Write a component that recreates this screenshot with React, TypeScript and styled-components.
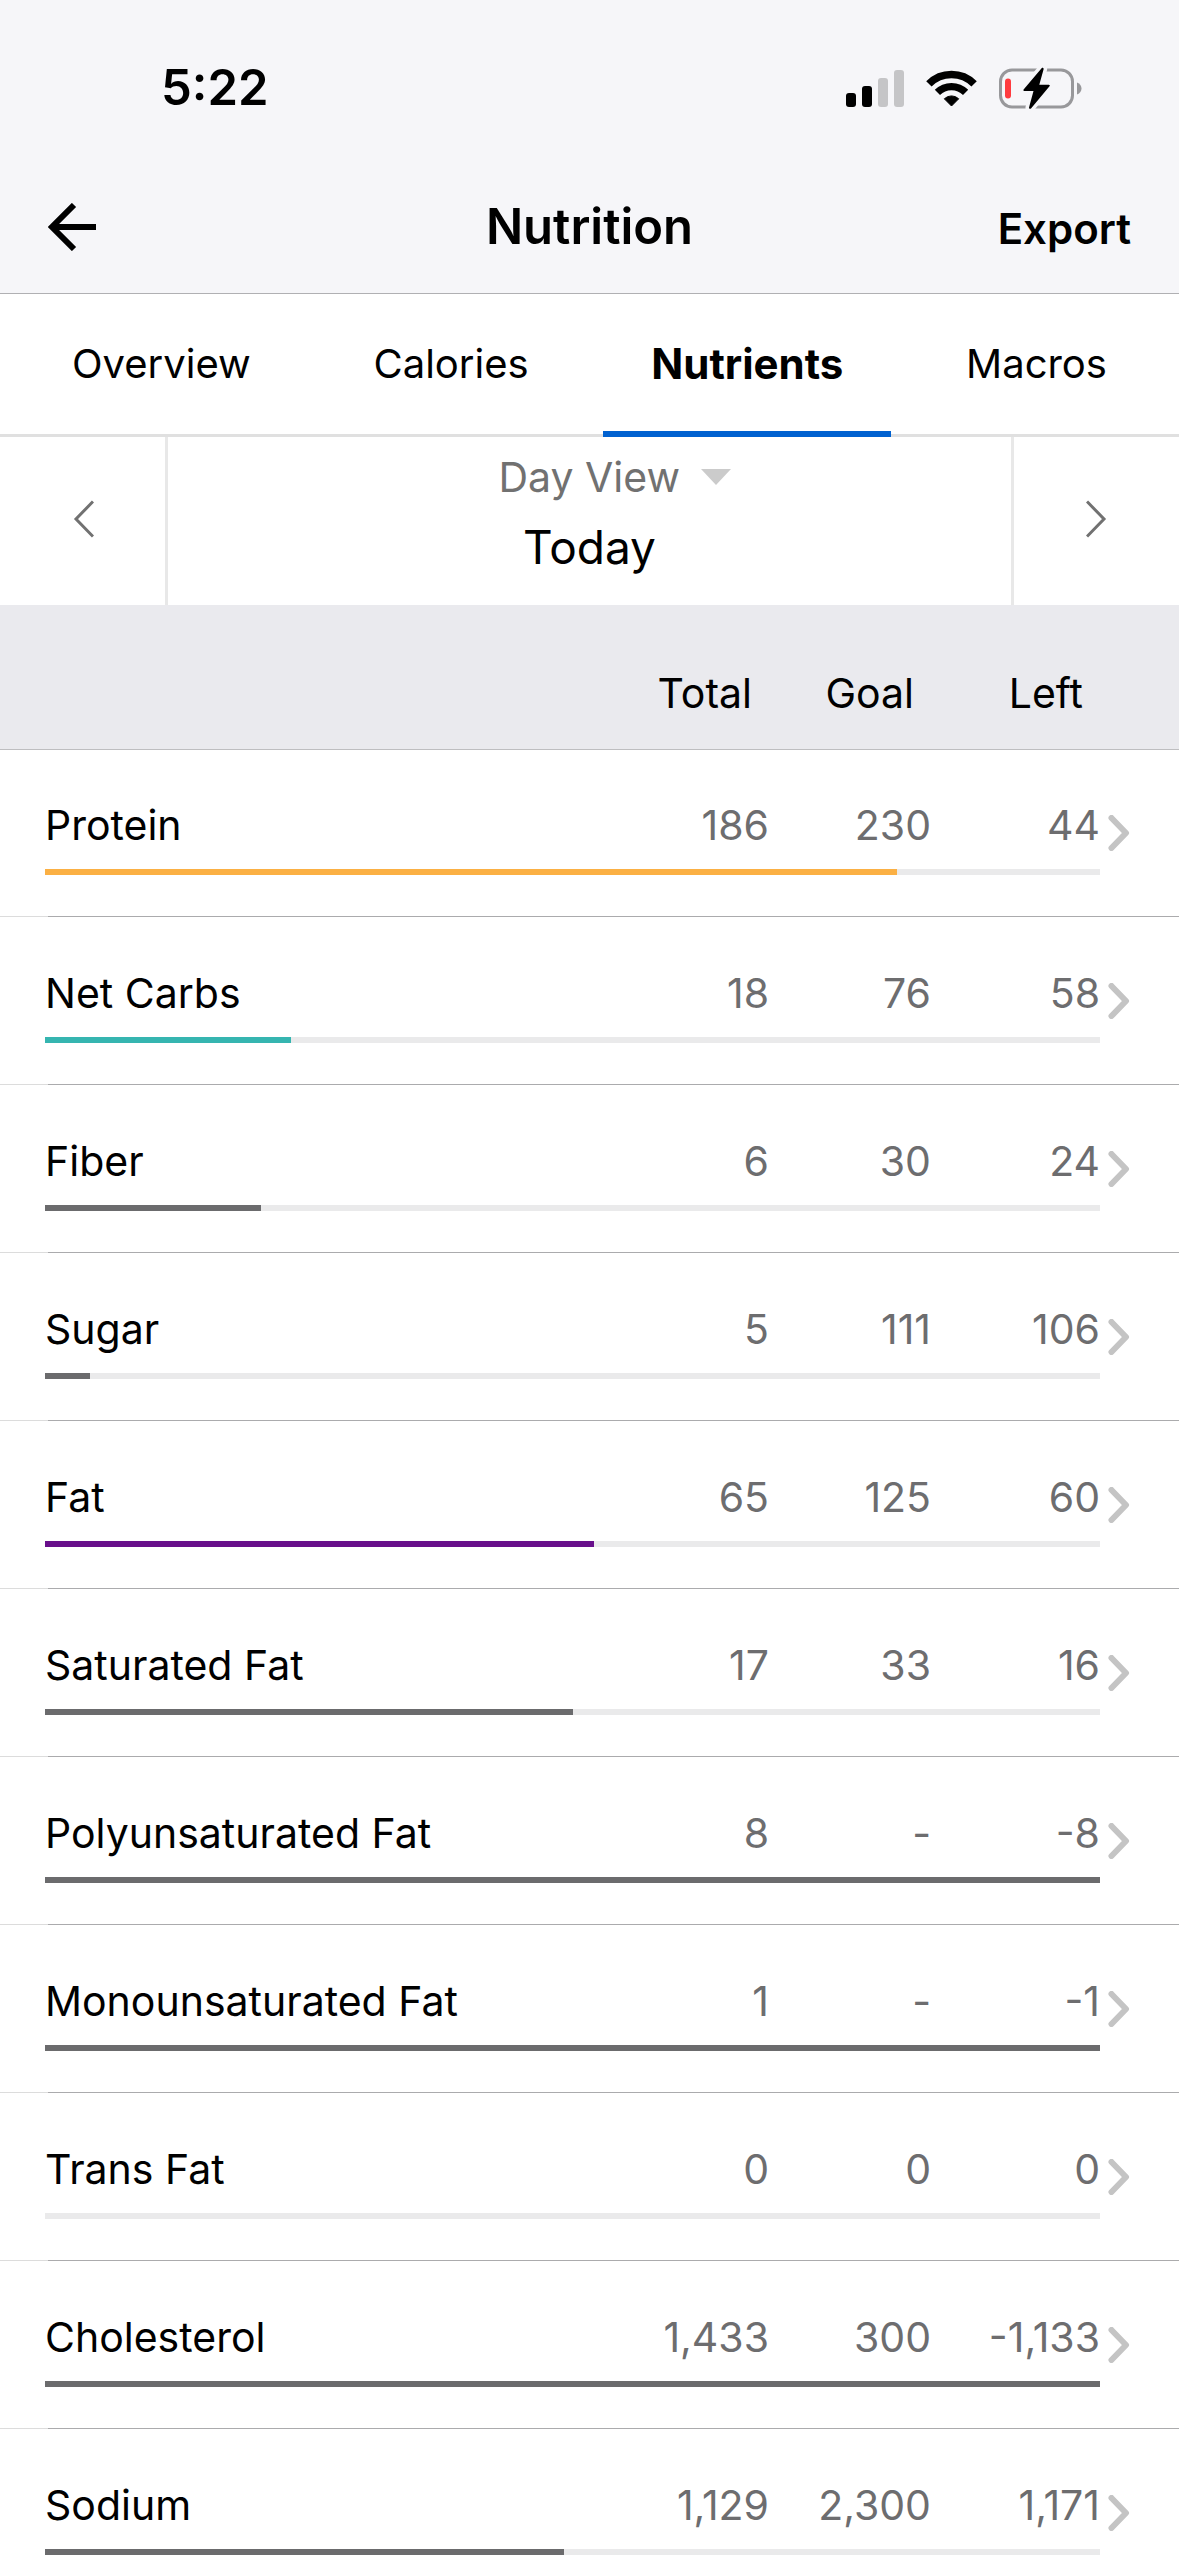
import React from "react";
import styled, { createGlobalStyle } from "styled-components";

const GlobalStyle = createGlobalStyle`
  *, *::before, *::after { box-sizing: border-box; }
  body { margin: 0; background: #fff; }
  button, select { font: inherit; color: inherit; border: 0; background: none; padding: 0; margin: 0; }
`;

const Screen = styled.div`
  display: flex;
  flex-direction: column;
  height: 100vh;
  overflow: hidden;
  background: #fff;
  color: #000;
  font-family: Inter, "Liberation Sans", sans-serif;
  font-size: 41px;
  line-height: 48px;
`;

const TopArea = styled.header`
  flex: none;
  background: #f6f6f9;
  border-bottom: 1px solid #b0b0b3;
`;

const StatusBar = styled.div`
  display: flex;
  align-items: center;
  justify-content: space-between;
  height: 160px;
  padding: 16px 96px 0 161px;
`;

const Clock = styled.time`
  font-size: 49px;
  line-height: 60px;
  font-weight: 600;
`;

const StatusIcons = styled.div`
  display: flex;
  align-items: center;
  gap: 22px;
`;

const NavBar = styled.div`
  display: grid;
  grid-template-columns: 1fr auto 1fr;
  align-items: baseline;
  height: 133px;
  padding: 37px 48px 36px;
`;

const BackButton = styled.button`
  display: flex;
  align-self: center;
  justify-self: start;
`;

const Title = styled.h1`
  margin: 0;
  font-size: 49px;
  line-height: 60px;
  font-weight: 600;
`;

const ExportButton = styled.button`
  justify-self: end;
  font-size: 42px;
  font-weight: 600;
`;

const Tabs = styled.nav`
  display: flex;
  flex: none;
  justify-content: space-between;
  height: 143px;
  padding: 0 24px;
  box-shadow: inset 0 -3px #e0e0e0;
`;

const Tab = styled.a<{ $active?: boolean }>`
  padding: 46px 48px 0;
  color: inherit;
  text-decoration: none;
  font-size: ${(p) => (p.$active ? 42 : 40)}px;
  font-weight: ${(p) => (p.$active ? 700 : 400)};
  border-bottom: 6px solid ${(p) => (p.$active ? "#0061d0" : "transparent")};
`;

const DateBar = styled.section`
  display: grid;
  flex: none;
  grid-template-columns: 168px 1fr 168px;
  height: 168px;
`;

const StepButton = styled.button<{ $side: "left" | "right" }>`
  display: flex;
  align-items: center;
  justify-content: center;
  padding-bottom: 4px;
  color: #717171;
  border-${(p) => (p.$side === "left" ? "right" : "left")}: 3px solid #e8e8e8;
`;

const DatePick = styled.div`
  display: flex;
  flex-direction: column;
  align-items: center;
  gap: 20px;
  padding-top: 16px;
`;

const ViewPicker = styled.label`
  display: flex;
  align-items: center;
  gap: 20px;
  padding-left: 50px;
  color: #717171;
`;

const ViewSelect = styled.select`
  appearance: none;
  line-height: 48px;
`;

const Today = styled.span`
  font-size: 46px;
  line-height: 52px;
`;

const Scroller = styled.main`
  flex: 1;
  min-height: 0;
  overflow-y: auto;
  scrollbar-width: none;
`;

const Table = styled.table`
  display: block;
`;

const Head = styled.thead`
  display: block;
  background: #eaeaee;
`;

const Body = styled.tbody`
  display: block;
  background: linear-gradient(#bebec0, #bebec0) top / 100% 1px no-repeat;
`;

const columns = "1fr 162px 162px 169px 79px";

const HeadRow = styled.tr`
  display: grid;
  grid-template-columns: ${columns};
  padding: 64px 0 32px 45px;
`;

const HeadCell = styled.th`
  padding: 0 17px 0 0;
  font-weight: 400;
  text-align: right;
`;

const Row = styled.tr`
  display: grid;
  grid-template-columns: ${columns};
  padding: 1px 0 1px 45px;
  background: linear-gradient(90deg, #dcdcdc 48px, #ababad 48px) bottom / 100% 1px no-repeat;
`;

const Name = styled.th`
  padding: 51px 0 20px;
  font-weight: 400;
  text-align: left;
  white-space: nowrap;
`;

const Amount = styled.td`
  padding: 51px 0 20px;
  color: #6d6d6f;
  text-align: right;
`;

const More = styled.td`
  display: flex;
  grid-column: 5;
  grid-row: 1 / span 2;
  align-items: center;
  padding: 0 0 0 8px;
`;

const MoreButton = styled.button`
  display: flex;
  color: #c4c4c4;
`;

const BarCell = styled.td`
  grid-column: 1 / 5;
  grid-row: 2;
  padding: 0 0 41px;
`;

const Track = styled.div`
  height: 6px;
  background: #eaeaeb;
`;

const Fill = styled.div<{ $color: string }>`
  height: 100%;
  background: ${(p) => p.$color};
`;

const GREY = "#6b6b6d";

type Nutrient = {
  name: string;
  total: string;
  goal: string;
  left: string;
  percent: number;
  color?: string;
};

const nutrients: Nutrient[] = [
  { name: "Protein", total: "186", goal: "230", left: "44", percent: 80.8, color: "#fbb044" },
  { name: "Net Carbs", total: "18", goal: "76", left: "58", percent: 23.3, color: "#35b5b0" },
  { name: "Fiber", total: "6", goal: "30", left: "24", percent: 20.5 },
  { name: "Sugar", total: "5", goal: "111", left: "106", percent: 4.3 },
  { name: "Fat", total: "65", goal: "125", left: "60", percent: 52, color: "#680f8b" },
  { name: "Saturated Fat", total: "17", goal: "33", left: "16", percent: 50 },
  { name: "Polyunsaturated Fat", total: "8", goal: "-", left: "-8", percent: 100 },
  { name: "Monounsaturated Fat", total: "1", goal: "-", left: "-1", percent: 100 },
  { name: "Trans Fat", total: "0", goal: "0", left: "0", percent: 0 },
  { name: "Cholesterol", total: "1,433", goal: "300", left: "-1,133", percent: 100 },
  { name: "Sodium", total: "1,129", goal: "2,300", left: "1,171", percent: 49.2 },
];

const SignalIcon = () => (
  <svg width="58" height="37" viewBox="0 0 58 37" aria-hidden="true">
    <rect x="0" y="23" width="10" height="14" rx="3" />
    <rect x="16" y="16" width="10" height="21" rx="3" />
    <rect x="32" y="8" width="10" height="29" rx="3" fill="#c5c5c7" />
    <rect x="48" y="0" width="10" height="37" rx="3" fill="#c5c5c7" />
  </svg>
);

const WifiIcon = () => (
  <svg width="51" height="37" viewBox="0 0 51 37" fill="none" stroke="#000" aria-hidden="true">
    <path d="M2.9 13.9A32 32 0 0 1 48.1 13.9" strokeWidth="7.6" />
    <path d="M11.4 22.4A20 20 0 0 1 39.6 22.4" strokeWidth="7.4" />
    <path d="M25.5 36L18.3 28.8A10.4 10.4 0 0 1 32.7 28.8Z" fill="#000" strokeWidth="1" strokeLinejoin="round" />
  </svg>
);

const BatteryIcon = () => (
  <svg width="84" height="43" viewBox="0 0 84 43" aria-hidden="true">
    <rect x="1.5" y="3" width="72" height="37" rx="11.5" fill="none" stroke="#98989b" strokeWidth="3" />
    <path d="M78 15.5c3 1.2 4.5 3.5 4.5 6s-1.5 4.8-4.5 6z" fill="#98989b" />
    <rect x="6" y="11.5" width="6" height="20" rx="3" fill="#ff3b3f" />
    <path
      d="M42.6 1.2L24.6 22.6C24 23.4 24.5 24 25.3 24H34.5L30 40.5C29.8 41.8 31.3 42.3 32 41.4L50.5 19.3C51.2 18.5 50.7 17.7 49.8 17.7H40.3L44.6 2.2C44.9 0.9 43.4 0.3 42.6 1.2Z"
      stroke="#f6f6f9"
      strokeWidth="7"
      strokeLinejoin="round"
      paintOrder="stroke"
    />
  </svg>
);

const BackIcon = () => (
  <svg width="49" height="48" viewBox="0 0 49 48" fill="none" stroke="#000" strokeWidth="6" aria-hidden="true">
    <path d="M26 2L4 24L26 46M4 24H48" />
  </svg>
);

const StepIcon = ({ flip }: { flip?: boolean }) => (
  <svg width="22" height="38" viewBox="0 0 22 38" fill="none" stroke="currentColor" strokeWidth="3" aria-hidden="true">
    <path d={flip ? "M1 1.5L18 19L1 36.5" : "M21 1.5L4 19L21 36.5"} />
  </svg>
);

const MoreIcon = () => (
  <svg width="22" height="36" viewBox="0 0 22 36" fill="none" stroke="currentColor" strokeWidth="6" strokeLinecap="round" strokeLinejoin="round" aria-hidden="true">
    <path d="M3.5 3L18 18L3.5 33" />
  </svg>
);

const NutrientRow = ({ name, total, goal, left, percent, color = GREY }: Nutrient) => (
  <Row>
    <Name scope="row">{name}</Name>
    <Amount>{total}</Amount>
    <Amount>{goal}</Amount>
    <Amount>{left}</Amount>
    <More>
      <MoreButton aria-label={`${name} details`}>
        <MoreIcon />
      </MoreButton>
    </More>
    <BarCell>
      <Track role="progressbar" aria-label={name} aria-valuenow={percent}>
        <Fill $color={color} style={{ width: `${percent}%` }} />
      </Track>
    </BarCell>
  </Row>
);

export default function App() {
  return (
    <>
      <GlobalStyle />
      <Screen>
        <TopArea>
          <StatusBar>
            <Clock>5:22</Clock>
            <StatusIcons>
              <SignalIcon />
              <WifiIcon />
              <BatteryIcon />
            </StatusIcons>
          </StatusBar>
          <NavBar>
            <BackButton aria-label="Back">
              <BackIcon />
            </BackButton>
            <Title>Nutrition</Title>
            <ExportButton>Export</ExportButton>
          </NavBar>
        </TopArea>
        <Tabs>
          <Tab href="#overview">Overview</Tab>
          <Tab href="#calories">Calories</Tab>
          <Tab href="#nutrients" $active aria-current="page">Nutrients</Tab>
          <Tab href="#macros">Macros</Tab>
        </Tabs>
        <DateBar>
          <StepButton $side="left" aria-label="Previous day">
            <StepIcon />
          </StepButton>
          <DatePick>
            <ViewPicker>
              <ViewSelect aria-label="View">
                <option>Day View</option>
              </ViewSelect>
              <svg width="30" height="16" viewBox="0 0 30 16" aria-hidden="true">
                <path d="M0 0H30L15 16Z" fill="#cbcbcb" />
              </svg>
            </ViewPicker>
            <Today>Today</Today>
          </DatePick>
          <StepButton $side="right" aria-label="Next day">
            <StepIcon flip />
          </StepButton>
        </DateBar>
        <Scroller>
          <Table>
            <Head>
              <HeadRow>
                <td />
                <HeadCell scope="col">Total</HeadCell>
                <HeadCell scope="col">Goal</HeadCell>
                <HeadCell scope="col">Left</HeadCell>
              </HeadRow>
            </Head>
            <Body>
              {nutrients.map((n) => (
                <NutrientRow key={n.name} {...n} />
              ))}
            </Body>
          </Table>
        </Scroller>
      </Screen>
    </>
  );
}
